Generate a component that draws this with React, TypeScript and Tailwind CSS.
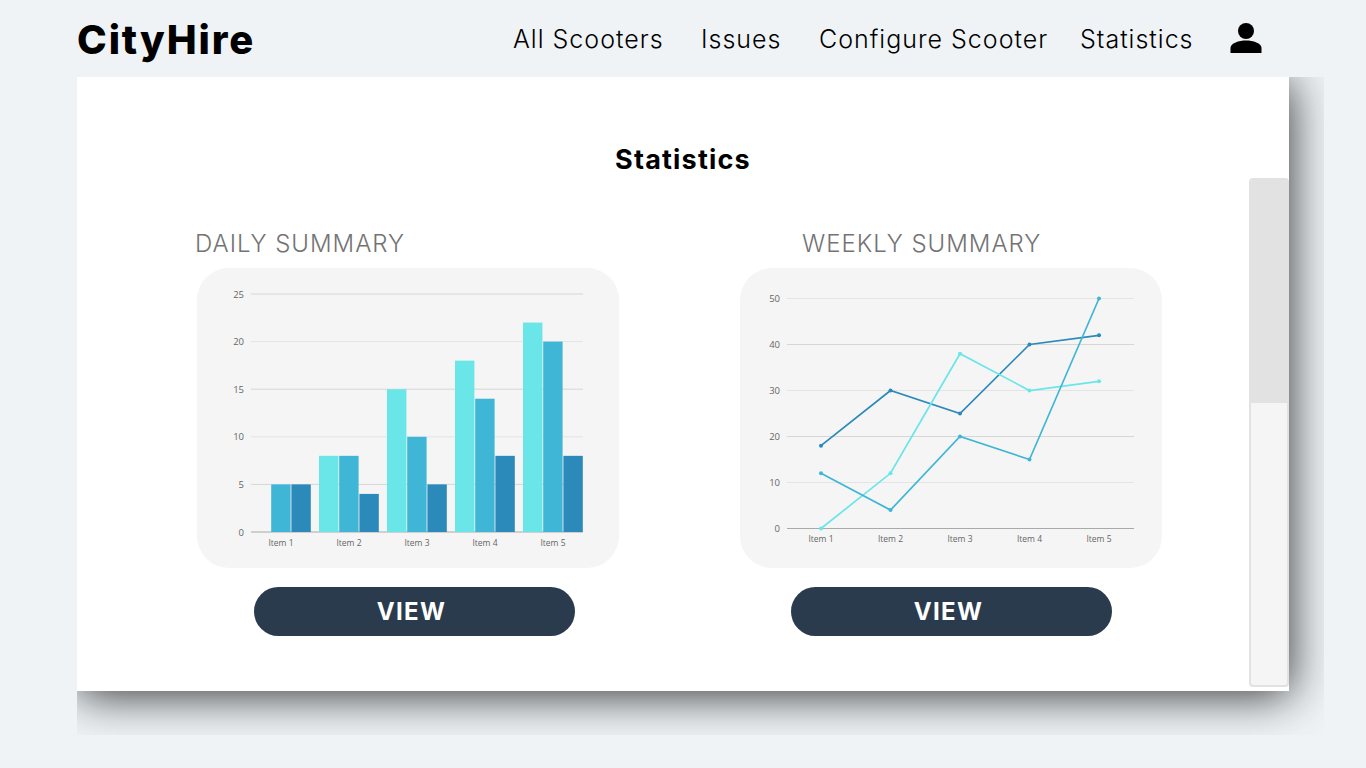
import React from 'react';

const bars = [
  { label: 'Item 1', values: [0, 5, 5] },
  { label: 'Item 2', values: [8, 8, 4] },
  { label: 'Item 3', values: [15, 10, 5] },
  { label: 'Item 4', values: [18, 14, 8] },
  { label: 'Item 5', values: [22, 20, 8] },
];
const colors = ['#6ae6e9', '#40b6d6', '#2b8ab9'];

const lines = [
  { color: '#2b8ab9', values: [18, 30, 25, 40, 42] },
  { color: '#6ae6e9', values: [0, 12, 38, 30, 32] },
  { color: '#40b6d6', values: [12, 4, 20, 15, 50] },
];

const BarChart = () => {
  const y = (v: number) => 532 - (v / 25) * 238;
  return (
    <svg width="422" height="300" viewBox="197 268 422 300" className="block">
      {[0, 5, 10, 15, 20, 25].map((t) => (
        <g key={t}>
          <line x1="251" x2="583" y1={y(t)} y2={y(t)} stroke={t === 0 ? '#a9a9a9' : t % 2 ? '#d6d6d6' : '#e4e4e4'} strokeWidth="1" />
          <text x="244" y={y(t) + 3.5} textAnchor="end" fontSize="9.5" fill="#666" fontFamily="Open Sans">{t}</text>
        </g>
      ))}
      {bars.map((b, i) => (
        <g key={b.label}>
          {b.values.map((v, j) => (
            <rect key={j} x={251 + i * 68 + j * 20.2} width="19.4" y={y(v)} height={532 - y(v)} fill={colors[j]} />
          ))}
          <text x={281 + i * 68} y="546" textAnchor="middle" fontSize="8.5" fill="#666" fontFamily="Open Sans">{b.label}</text>
        </g>
      ))}
    </svg>
  );
};

const LineChart = () => {
  const y = (v: number) => 528.5 - (v / 50) * 230;
  const x = (i: number) => 821 + i * 69.5;
  return (
    <svg width="422" height="300" viewBox="740 268 422 300" className="block">
      {[0, 10, 20, 30, 40, 50].map((t) => (
        <g key={t}>
          <line x1="787" x2="1134" y1={y(t)} y2={y(t)} stroke={t === 0 ? '#a9a9a9' : t % 20 === 0 ? '#d6d6d6' : '#e4e4e4'} strokeWidth="1" />
          <text x="780" y={y(t) + 3.5} textAnchor="end" fontSize="9.5" fill="#666" fontFamily="Open Sans">{t}</text>
        </g>
      ))}
      {lines.map((l) => (
        <g key={l.color}>
          <polyline fill="none" stroke={l.color} strokeWidth="1.7" points={l.values.map((v, i) => `${x(i)},${y(v)}`).join(' ')} />
          {l.values.map((v, i) => (
            <circle key={i} cx={x(i)} cy={y(v)} r="2" fill={l.color} />
          ))}
        </g>
      ))}
      {[1, 2, 3, 4, 5].map((n, i) => (
        <text key={n} x={x(i)} y="542" textAnchor="middle" fontSize="8.5" fill="#666" fontFamily="Open Sans">Item {n}</text>
      ))}
    </svg>
  );
};

export default function App() {
  return (
    <div className="h-screen overflow-hidden bg-[#eff3f6] font-['Inter',sans-serif] text-black">
      {/* Header */}
      <header className="flex h-[77px] items-center pl-[77px]">
        <div className="w-[436px] pt-[2px] text-[40px] font-extrabold tracking-[1.9px]">CityHire</div>
        <nav className="flex items-center pt-[2px] text-[25px] font-light tracking-[1px]">
          <a className="w-[188px]">All Scooters</a>
          <a className="w-[118px]">Issues</a>
          <a className="w-[261px]">Configure Scooter</a>
          <a className="w-[150px]">Statistics</a>
        </nav>
        <svg width="32" height="32" viewBox="0 0 32 32" className="-mt-[2px]">
          <circle cx="16" cy="9" r="8" fill="#000" />
          <path d="M0.5 31 V26 C0.5 21 9 18.5 16 18.5 C23 18.5 31.5 21 31.5 26 V31 Z" fill="#000" />
        </svg>
      </header>

      {/* shadow clipped on top and left */}
      <div className="ml-[77px] h-[658px] w-[1247px] overflow-hidden">
        <main className="relative h-[614px] w-[1212px] bg-white shadow-[1px_4px_44px_rgba(0,0,0,0.8)]">
          <h1 className="pt-[67px] text-center text-[27px] leading-[32px] font-bold tracking-[1.2px]">Statistics</h1>

          <div className="mt-[52px] flex">
            <section className="ml-[118px] w-[543px]">
              <h2 className="pt-[1px] text-[24px] leading-[29px] font-light tracking-[1px] text-[#737373]">DAILY SUMMARY</h2>
              <div className="mt-[10px] ml-[2px] h-[300px] w-[422px] overflow-hidden rounded-[32px] bg-[#f5f5f5]">
                <BarChart />
              </div>
              <button className="mt-[19px] ml-[59px] block h-[49px] w-[321px] rounded-full bg-[#2a3b4d] pr-[6px] text-[24px] font-bold tracking-[1.4px] text-white">VIEW</button>
            </section>
            <section className="w-[460px]">
              <h2 className="ml-[64px] pt-[1px] text-[24px] leading-[29px] font-light tracking-[1px] text-[#737373]">WEEKLY SUMMARY</h2>
              <div className="mt-[10px] ml-[2px] h-[300px] w-[422px] overflow-hidden rounded-[32px] bg-[#f5f5f5]">
                <LineChart />
              </div>
              <button className="mt-[19px] ml-[53px] block h-[49px] w-[321px] rounded-full bg-[#2a3b4d] pr-[6px] text-[24px] font-bold tracking-[1.4px] text-white">VIEW</button>
            </section>
          </div>

          {/* scrollbar */}
          <div className="absolute top-[101px] right-0 flex h-[509px] w-[40px] flex-col overflow-hidden rounded-[4px] border-2 border-[#e2e2e2] bg-[#f5f5f5]">
            <div className="h-[223px] bg-[#e2e2e2]" />
          </div>
        </main>
      </div>
    </div>
  );
}
